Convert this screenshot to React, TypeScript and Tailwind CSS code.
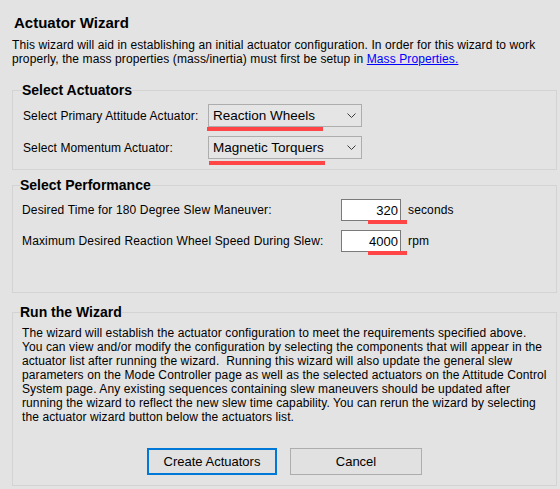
import React from 'react';

const Chevron: React.FC = () => (
  <svg width="9" height="5" viewBox="0 0 9 5" className="shrink-0">
    <polyline points="0.5,0.5 4.5,4.5 8.5,0.5" fill="none" stroke="#3c3c3c" strokeWidth="1" />
  </svg>
);

const Dropdown: React.FC<{ value: string; markLeft: number; markWidth: number; markTop: number }> = ({
  value,
  markLeft,
  markWidth,
  markTop,
}) => (
  <div className="relative">
    <div className="flex items-center justify-between w-[154px] h-[23px] border border-[#adadad] bg-[#e5e5e5] pl-[4px] pr-[5px]">
      <span className="text-[13.5px] leading-none tracking-normal">{value}</span>
      <Chevron />
    </div>
    {/* red highlight marks */}
    <div
      className="absolute h-[4px] bg-[#ff4545]"
      style={{ left: markLeft, width: markWidth, top: markTop }}
    />
  </div>
);

const NumberBox: React.FC<{ value: string; unit: string }> = ({ value, unit }) => (
  <div className="flex items-center">
    <div className="relative">
      <div className="flex items-center justify-end w-[60px] h-[22px] border border-[#7a7a7a] bg-white pr-[2px]">
        <span className="text-[13px] leading-none tracking-normal">{value}</span>
      </div>
      <div className="absolute left-[27px] top-[21px] w-[39px] h-[4px] bg-[#ff4545]" />
    </div>
    <span className="ml-[7px] text-[12px]">{unit}</span>
  </div>
);

export default function App() {
  return (
    <div className="w-[560px] h-[489px] overflow-hidden bg-[#e3e3e3] text-black font-['Liberation_Sans',Arial,sans-serif]">
      <h1 className="pt-[14px] pl-[14px] text-[15px] leading-[18px] font-bold">Actuator Wizard</h1>
      <p className="mt-[6px] pl-[12px] text-[12px] leading-[14px] tracking-[0.1px]">
        This wizard will aid in establishing an initial actuator configuration. In order for this wizard to work
        <br />
        properly, the mass properties (mass/inertia) must first be setup in{' '}
        <a className="text-[#0000ff] underline">Mass Properties.</a>
      </p>

      {/* Select Actuators */}
      <fieldset className="mt-[16px] ml-[12px] mr-[3px] border border-[#d3d3d3] pb-[10px]">
        <legend className="ml-[9px] text-[14px] leading-4 font-bold">Select Actuators</legend>
        <div className="pt-[6px] pl-[10px] flex flex-col gap-[9px] text-[12px] tracking-[0.1px]">
          <div className="flex items-center">
            <span className="w-[185px]">Select Primary Attitude Actuator:</span>
            <Dropdown value="Reaction Wheels" markLeft={-1} markWidth={116} markTop={23} />
          </div>
          <div className="flex items-center">
            <span className="w-[185px]">Select Momentum Actuator:</span>
            <Dropdown value="Magnetic Torquers" markLeft={1} markWidth={116} markTop={25} />
          </div>
        </div>
      </fieldset>

      {/* Select Performance */}
      <fieldset className="mt-[7px] ml-[12px] mr-[3px] border border-[#d3d3d3] pb-[40px]">
        <legend className="ml-[7px] text-[14px] leading-4 font-bold">Select Performance</legend>
        <div className="pt-[6px] pl-[9px] flex flex-col gap-[9px] text-[12px] tracking-[0.15px]">
          <div className="flex items-center">
            <span className="w-[319px]">Desired Time for 180 Degree Slew Maneuver:</span>
            <NumberBox value="320" unit="seconds" />
          </div>
          <div className="flex items-center">
            <span className="w-[319px]">Maximum Desired Reaction Wheel Speed During Slew:</span>
            <NumberBox value="4000" unit="rpm" />
          </div>
        </div>
      </fieldset>

      {/* Run the Wizard */}
      <fieldset className="mt-[11px] ml-[12px] mr-[3px] border border-[#d3d3d3] pb-[10px]">
        <legend className="ml-[7px] text-[14px] leading-4 font-bold">Run the Wizard</legend>
        <p className="pt-[6px] pl-[9px] text-[12px] leading-[14px] tracking-[0.1px]">
          The wizard will establish the actuator configuration to meet the requirements specified above.
          <br />
          You can view and/or modify the configuration by selecting the components that will appear in the
          <br />
          actuator list after running the wizard.{'\u00a0 '}Running this wizard will also update the general slew
          <br />
          parameters on the Mode Controller page as well as the selected actuators on the Attitude Control
          <br />
          System page. Any existing sequences containing slew maneuvers should be updated after
          <br />
          running the wizard to reflect the new slew time capability. You can rerun the wizard by selecting
          <br />
          the actuator wizard button below the actuators list.
        </p>
        <div className="mt-[24px] flex justify-center gap-[13px] text-[13px]">
          <button className="w-[130px] h-[27px] border-2 border-[#0078d7] bg-[#e1e1e1]">Create Actuators</button>
          <button className="w-[132px] h-[27px] border border-[#adadad] bg-[#e1e1e1]">Cancel</button>
        </div>
      </fieldset>
    </div>
  );
}
